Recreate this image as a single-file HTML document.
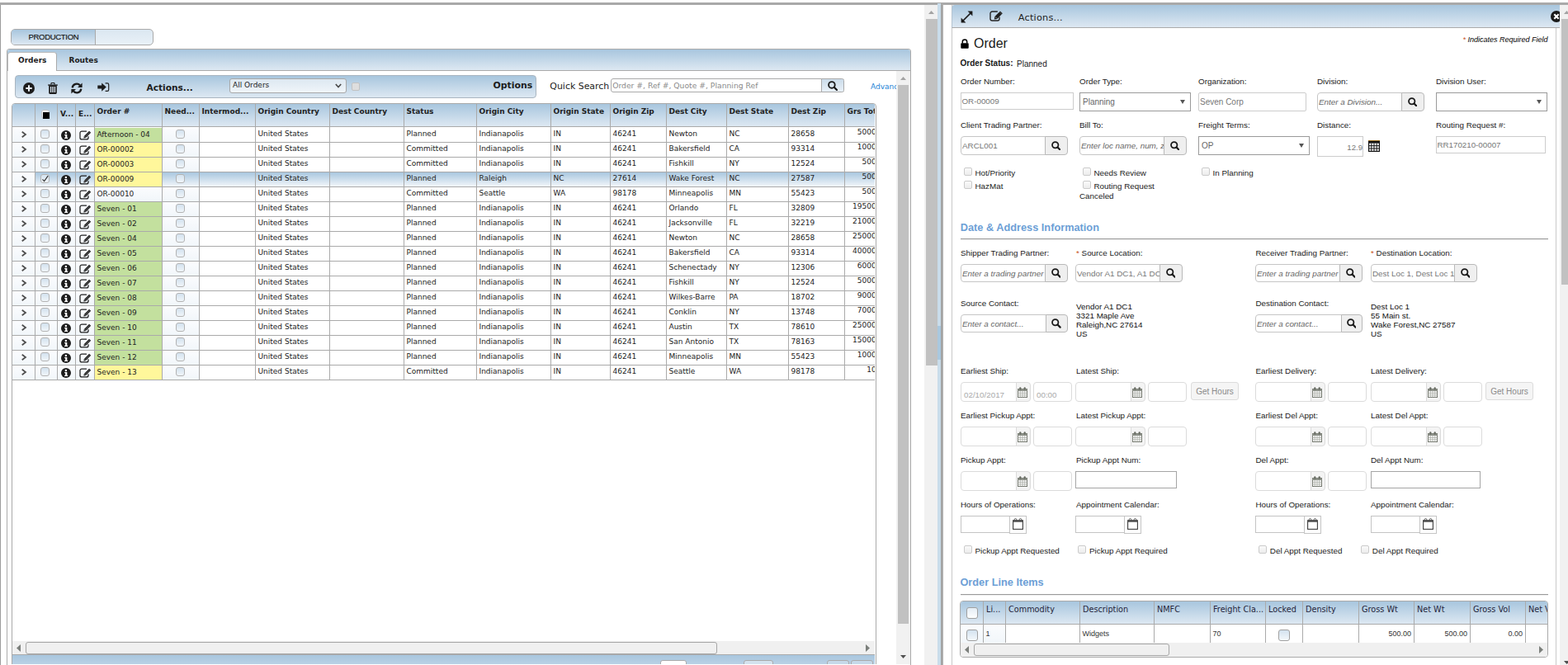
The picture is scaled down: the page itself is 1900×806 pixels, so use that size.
<!DOCTYPE html>
<html lang="en"><head><meta charset="utf-8"><title>Orders</title>
<style>
html,body{margin:0;padding:0;}
body{width:1900px;height:806px;overflow:hidden;background:#fff;position:relative;font-family:"Liberation Sans",Arial,sans-serif;font-size:10px;color:#222;}
.b{position:absolute;box-sizing:border-box;}
.t{position:absolute;white-space:nowrap;}
.fa{font-family:"Liberation Sans",Arial,sans-serif;}
.fg{font-family:"DejaVu Sans Condensed","DejaVu Sans",sans-serif;}
.fw{font-family:"DejaVu Sans",sans-serif;}
.grad{background:linear-gradient(#a8c6de,#dde8f2);}
table.g{border-collapse:separate;border-spacing:0;table-layout:fixed;font-family:"DejaVu Sans",sans-serif;font-size:9px;color:#222;}
table.g td,table.g th{box-sizing:border-box;border-right:1px solid #aaa;border-bottom:1px solid #aaa;padding:0 0 0 2.5px;overflow:hidden;white-space:nowrap;text-align:left;vertical-align:top;}
table.g th{height:28px;font-weight:700;line-height:12px;padding-top:3px;background:transparent;}
table.g td{height:18px;line-height:14px;background:#fff;}
table.g td.o{line-height:16px;}
table.g tr.sp td{height:1px;border-bottom:0;padding:0;line-height:0;}
table.g td.f{background:linear-gradient(#fbfcfe,#f1f6fa);}
table.g td.gr{background:#c3e09e;}
table.g td.ye{background:#fff79b;}
table.g tr.sel td{background:linear-gradient(#a9c7df,#f2f6fa);}
table.g tr.sel td.f0{background:linear-gradient(#fbfcfe,#f1f6fa);}
table.g tr.sel td.ye{background:#fff79b;}
table.g td.c{padding:0;position:relative;}
.ic{position:absolute;display:block;line-height:0;}
table.g td.num{text-align:right;padding-right:3px;line-height:11px;}
.cb{display:inline-block;box-sizing:border-box;width:11px;height:11px;border:1px solid #b3b3b3;border-radius:3px;background:linear-gradient(#d3e2ef,#f0f5f9);vertical-align:top;}
.cbx{position:absolute;box-sizing:border-box;width:10px;height:10px;border:1px solid #cbcbcb;border-radius:2px;background:linear-gradient(#fafafa,#ececec);}
.inp{position:absolute;box-sizing:border-box;border:1px solid #ccc;background:#fff;}
.btn{position:absolute;box-sizing:border-box;border:1px solid #bbb;background:#efefef;}
</style></head><body>
<style>
table.li th{font-weight:400;height:28px;padding-top:4px;font-size:9.7px;padding-left:3px;font-family:"DejaVu Sans",sans-serif;color:#26263c;}
table.li td{height:23px;line-height:22px;}
table.li td.a{font-family:"Liberation Sans",Arial,sans-serif;color:#333;line-height:23px;}
table.li td.r{text-align:right;padding-right:3px;}
.cb2{display:inline-block;box-sizing:border-box;width:14px;height:14px;border:1px solid #a0a0a0;border-radius:3px;background:linear-gradient(#d3e2ef,#f4f8fb);vertical-align:top;}
th .cb2{background:linear-gradient(#e4edf5,#fdfeff);}
</style><div class="b " style="left:0px;top:3px;width:1900px;height:3px;background:#a9a9a9;"></div>
<div class="b " style="left:0px;top:6px;width:1px;height:800px;background:#9c9c9c;"></div>
<div class="b " style="left:13px;top:35px;width:173px;height:20px;border:1px solid #aaa;border-radius:5px;overflow:hidden;background:linear-gradient(#dbe7f1,#e9f1f7);"><div class="b grad" style="left:0px;top:0px;width:102px;height:18px;border-right:1px solid #aaa;"></div></div>
<span class="t fa " style="left:34.5px;top:38.51px;font-size:9.5px;line-height:12px;color:#111;letter-spacing:-0.3px;-webkit-text-stroke:0.15px #111;">PRODUCTION</span>
<div class="b " style="left:8px;top:59px;width:1096px;height:760px;border:1px solid #aaa;border-radius:3px 3px 0 0;"></div>
<div class="b grad" style="left:9px;top:60px;width:1094px;height:26px;border-bottom:1px solid #aaa;border-radius:3px 3px 0 0;"></div>
<div class="b " style="left:9px;top:63px;width:60px;height:23px;background:#fff;border:1px solid #bcbcbc;border-right-color:#aaa;border-bottom:0;border-radius:4px 4px 0 0;"></div>
<span class="t fw " style="left:22px;top:67.09px;font-size:9.0px;line-height:12px;color:#1c1c1c;font-weight:700;">Orders</span>
<span class="t fw " style="left:83.5px;top:67.09px;font-size:9.0px;line-height:12px;color:#1c1c1c;font-weight:700;">Routes</span>
<div class="b grad" style="left:18px;top:91px;width:632px;height:28px;border:1px solid #a9b5c0;border-radius:4px;"></div>
<div class="b" style="left:28px;top:100px"><svg width="14" height="14" viewBox="0 0 14 14" style="display:block;"><circle cx="7" cy="7" r="7" fill="#1c1c1c"/><path d="M6 3.3h2v2.7h2.7v2H8v2.7H6V8H3.3V6H6z" fill="#eef3f8"/></svg></div>
<div class="b" style="left:58px;top:100px"><svg width="12" height="14" viewBox="0 0 12 14" style="display:block;"><path d="M3.9 2.6V1.7c0-.8.5-1.3 1.2-1.3h1.8c.7 0 1.2.5 1.2 1.3v.9" fill="none" stroke="#1c1c1c" stroke-width="1.1"/><rect x="0.2" y="2.4" width="11.6" height="1.4" fill="#1c1c1c"/><path d="M1.2 3.6h9.6v9c0 .8-.5 1.3-1.2 1.3H2.4c-.7 0-1.2-.5-1.2-1.3z" fill="#1c1c1c"/><rect x="2.9" y="5" width="1.35" height="7" fill="#d6e3ee"/><rect x="5.3" y="5" width="1.4" height="7" fill="#d6e3ee"/><rect x="7.75" y="5" width="1.35" height="7" fill="#d6e3ee"/></svg></div>
<div class="b" style="left:86px;top:100px"><svg width="14" height="14" viewBox="0 0 14 14" style="display:block;"><path d="M1.7 6.4A5.3 5.3 0 0 1 11 3.5" fill="none" stroke="#1c1c1c" stroke-width="2.3"/><path d="M13.6 0.4v5.6H8z" fill="#1c1c1c"/><path d="M12.3 7.6A5.3 5.3 0 0 1 3 10.5" fill="none" stroke="#1c1c1c" stroke-width="2.3"/><path d="M0.4 13.6V8h5.6z" fill="#1c1c1c"/></svg></div>
<div class="b" style="left:117.5px;top:100px"><svg width="15" height="12" viewBox="0 0 15 12" style="display:block;"><path d="M0.3 3.5h4.9V0.4l5.6 5.2-5.6 5.2V7.4H0.3z" fill="#1c1c1c"/><path d="M9.6 0.8h2.5c1 0 1.6.6 1.6 1.6v6.4c0 1-.6 1.6-1.6 1.6H9.6" fill="none" stroke="#1c1c1c" stroke-width="1.15"/></svg></div>
<span class="t fw " style="left:177.5px;top:98.93px;font-size:10.6px;line-height:14px;color:#1c1c1c;font-weight:700;">Actions...</span>
<div class="b " style="left:278px;top:95px;width:142px;height:18px;border:1px solid #a8a8a8;border-radius:3px;background:linear-gradient(#dde8f1,#f0f5f9);"></div>
<span class="t fw " style="left:282px;top:96.89px;font-size:9.0px;line-height:12px;color:#222;">All Orders</span>
<div class="b" style="left:405.5px;top:101px"><svg width="8" height="6" viewBox="0 0 8 6" style="display:block;"><path d="M0.8 1L4 4.6L7.2 1" fill="none" stroke="#4a4a4a" stroke-width="1.6"/></svg></div>
<div class="b " style="left:426px;top:100px;width:10px;height:10px;border:1px solid #c2c2c2;border-radius:2px;background:#dedede;"></div>
<span class="t fw " style="left:597.5px;top:96.83px;font-size:10.9px;line-height:14px;color:#1c1c1c;font-weight:700;">Options</span>
<span class="t fw " style="left:666.3px;top:98.41px;font-size:10.95px;line-height:14px;color:#1c1c1c;">Quick Search</span>
<div class="b " style="left:740px;top:95px;width:256px;height:17px;border:1px solid #aaa;border-radius:3px 0 0 3px;background:#fff;"></div>
<span class="t fw " style="left:742.2px;top:97.81px;font-size:9.22px;line-height:12px;color:#8a8a8a;">Order #, Ref #, Quote #, Planning Ref</span>
<div class="b " style="left:995px;top:95px;width:28px;height:17px;border:1px solid #aaa;border-radius:0 2.5px 2.5px 0;background:linear-gradient(#cbdcea,#e9f1f8);"></div>
<div class="b" style="left:1003px;top:98px"><svg width="12" height="12" viewBox="0 0 12 12" style="display:block;"><circle cx="4.9" cy="4.9" r="3.8" fill="none" stroke="#1a1a1a" stroke-width="1.85"/><path d="M7.8 7.8L11 11" stroke="#1a1a1a" stroke-width="2.3" stroke-linecap="round"/></svg></div>
<div class="b " style="left:1050px;top:96px;width:36px;height:16px;overflow:hidden;"><span class="t fw " style="left:5px;top:2.99px;font-size:9.0px;line-height:12px;color:#2183d6;">Advanced</span></div>
<div class="b " style="left:14px;top:125px;width:1048px;height:700px;border:1px solid #aaa;border-radius:4px 4px 0 0;overflow:hidden;background:#fff;"><div class="b grad" style="left:0px;top:0px;width:1045px;height:28px;border-bottom:1px solid #aaa;"></div><div class="b" style="left:0;top:0;width:1045px;overflow:hidden"><table class="g" style="width:1065px"><colgroup><col style="width:28px"><col style="width:27px"><col style="width:22px"><col style="width:23px"><col style="width:82px"><col style="width:45px"><col style="width:68px"><col style="width:90px"><col style="width:90px"><col style="width:88px"><col style="width:90px"><col style="width:72px"><col style="width:68px"><col style="width:73px"><col style="width:75px"><col style="width:68px"><col style="width:56px"></colgroup><tr class="hd"><th></th><th style="padding:0;position:relative"><span style="position:absolute;left:6.5px;top:7px;width:10.5px;height:10.5px;box-sizing:border-box;border:1px solid #c2c2c2;border-radius:3px;background:linear-gradient(#fff,#e6eff6)"></span><span style="position:absolute;left:9px;top:10px;width:8px;height:8px;background:#000"></span></th><th style="padding-top:6px;padding-left:3px">V...</th><th style="padding-top:6px;padding-left:3px">E...</th><th>Order #</th><th>Need...</th><th>Intermod...</th><th>Origin Country</th><th>Dest Country</th><th>Status</th><th>Origin City</th><th>Origin State</th><th>Origin Zip</th><th>Dest City</th><th>Dest State</th><th>Dest Zip</th><th>Grs Tot Wt</th></tr><tr class="sp"><td></td><td></td><td></td><td></td><td></td><td></td><td></td><td></td><td></td><td></td><td></td><td></td><td></td><td></td><td></td><td></td><td></td></tr><tr class=""><td class="c f f0"><span class="ic" style="left:11px;top:4px"><svg width="7" height="8" viewBox="0 0 7 8" style="display:block;"><path d="M0.7 0.8 L5 4 L0.7 7.2" fill="none" stroke="#4d4d4d" stroke-width="1.7"/></svg></span></td><td class="c f"><span class="ic" style="left:6px;top:2px"><span class="cb"></span></span></td><td class="c f"><span class="ic" style="left:4px;top:3px"><svg width="12" height="12" viewBox="0 0 12 12" style="display:block;"><circle cx="6" cy="6" r="6" fill="#1c1c1c"/><circle cx="5.9" cy="2.9" r="1.25" fill="#fff"/><path d="M4.2 5h3.1v3.7h0.9v1.4H4.1V8.7h1.1V6.3H4.2z" fill="#fff"/></svg></span></td><td class="c f"><span class="ic" style="left:4px;top:2.5px"><svg width="15.2" height="12" viewBox="0 0 15.2 12" style="display:block;"><path d="M9 1H3.1A2.1 2.1 0 0 0 1 3.1v5.8A2.1 2.1 0 0 0 3.1 11h5.8A2.1 2.1 0 0 0 11 8.9V7.2" fill="none" stroke="#222" stroke-width="1.25"/><path d="M5.3 9.6l0.6-2.7 6.2-6.2 2.1 2.1-6.2 6.2z" fill="#1e1e1e"/><path d="M7.6 7.4l5.1-5.1" stroke="#8c8c8c" stroke-width="0.55"/><path d="M6.4 7.2l1.3 1.3" stroke="#f3f7fb" stroke-width="0.55"/></svg></span></td><td class="o gr">Afternoon - 04</td><td class="c f"><span class="ic" style="left:16px;top:2px"><span class="cb"></span></span></td><td></td><td>United States</td><td></td><td>Planned</td><td>Indianapolis</td><td>IN</td><td>46241</td><td>Newton</td><td>NC</td><td>28658</td><td class="num">5000.00</td></tr><tr class=""><td class="c f f0"><span class="ic" style="left:11px;top:4px"><svg width="7" height="8" viewBox="0 0 7 8" style="display:block;"><path d="M0.7 0.8 L5 4 L0.7 7.2" fill="none" stroke="#4d4d4d" stroke-width="1.7"/></svg></span></td><td class="c f"><span class="ic" style="left:6px;top:2px"><span class="cb"></span></span></td><td class="c f"><span class="ic" style="left:4px;top:3px"><svg width="12" height="12" viewBox="0 0 12 12" style="display:block;"><circle cx="6" cy="6" r="6" fill="#1c1c1c"/><circle cx="5.9" cy="2.9" r="1.25" fill="#fff"/><path d="M4.2 5h3.1v3.7h0.9v1.4H4.1V8.7h1.1V6.3H4.2z" fill="#fff"/></svg></span></td><td class="c f"><span class="ic" style="left:4px;top:2.5px"><svg width="15.2" height="12" viewBox="0 0 15.2 12" style="display:block;"><path d="M9 1H3.1A2.1 2.1 0 0 0 1 3.1v5.8A2.1 2.1 0 0 0 3.1 11h5.8A2.1 2.1 0 0 0 11 8.9V7.2" fill="none" stroke="#222" stroke-width="1.25"/><path d="M5.3 9.6l0.6-2.7 6.2-6.2 2.1 2.1-6.2 6.2z" fill="#1e1e1e"/><path d="M7.6 7.4l5.1-5.1" stroke="#8c8c8c" stroke-width="0.55"/><path d="M6.4 7.2l1.3 1.3" stroke="#f3f7fb" stroke-width="0.55"/></svg></span></td><td class="o ye">OR-00002</td><td class="c f"><span class="ic" style="left:16px;top:2px"><span class="cb"></span></span></td><td></td><td>United States</td><td></td><td>Committed</td><td>Indianapolis</td><td>IN</td><td>46241</td><td>Bakersfield</td><td>CA</td><td>93314</td><td class="num">1000.00</td></tr><tr class=""><td class="c f f0"><span class="ic" style="left:11px;top:4px"><svg width="7" height="8" viewBox="0 0 7 8" style="display:block;"><path d="M0.7 0.8 L5 4 L0.7 7.2" fill="none" stroke="#4d4d4d" stroke-width="1.7"/></svg></span></td><td class="c f"><span class="ic" style="left:6px;top:2px"><span class="cb"></span></span></td><td class="c f"><span class="ic" style="left:4px;top:3px"><svg width="12" height="12" viewBox="0 0 12 12" style="display:block;"><circle cx="6" cy="6" r="6" fill="#1c1c1c"/><circle cx="5.9" cy="2.9" r="1.25" fill="#fff"/><path d="M4.2 5h3.1v3.7h0.9v1.4H4.1V8.7h1.1V6.3H4.2z" fill="#fff"/></svg></span></td><td class="c f"><span class="ic" style="left:4px;top:2.5px"><svg width="15.2" height="12" viewBox="0 0 15.2 12" style="display:block;"><path d="M9 1H3.1A2.1 2.1 0 0 0 1 3.1v5.8A2.1 2.1 0 0 0 3.1 11h5.8A2.1 2.1 0 0 0 11 8.9V7.2" fill="none" stroke="#222" stroke-width="1.25"/><path d="M5.3 9.6l0.6-2.7 6.2-6.2 2.1 2.1-6.2 6.2z" fill="#1e1e1e"/><path d="M7.6 7.4l5.1-5.1" stroke="#8c8c8c" stroke-width="0.55"/><path d="M6.4 7.2l1.3 1.3" stroke="#f3f7fb" stroke-width="0.55"/></svg></span></td><td class="o ye">OR-00003</td><td class="c f"><span class="ic" style="left:16px;top:2px"><span class="cb"></span></span></td><td></td><td>United States</td><td></td><td>Committed</td><td>Indianapolis</td><td>IN</td><td>46241</td><td>Fishkill</td><td>NY</td><td>12524</td><td class="num">500.00</td></tr><tr class="sel"><td class="c f f0"><span class="ic" style="left:11px;top:4px"><svg width="7" height="8" viewBox="0 0 7 8" style="display:block;"><path d="M0.7 0.8 L5 4 L0.7 7.2" fill="none" stroke="#4d4d4d" stroke-width="1.7"/></svg></span></td><td class="c f"><span class="ic" style="left:6px;top:2px"><span class="cb" style="position:relative"><svg width="9" height="9" viewBox="0 0 9 9" style="position:absolute;left:0;top:0"><path d="M1.5 5.4L3.6 7.6L8.2 1.2" fill="none" stroke="#333" stroke-width="1.2"/></svg></span></span></td><td class="c f"><span class="ic" style="left:4px;top:3px"><svg width="12" height="12" viewBox="0 0 12 12" style="display:block;"><circle cx="6" cy="6" r="6" fill="#1c1c1c"/><circle cx="5.9" cy="2.9" r="1.25" fill="#fff"/><path d="M4.2 5h3.1v3.7h0.9v1.4H4.1V8.7h1.1V6.3H4.2z" fill="#fff"/></svg></span></td><td class="c f"><span class="ic" style="left:4px;top:2.5px"><svg width="15.2" height="12" viewBox="0 0 15.2 12" style="display:block;"><path d="M9 1H3.1A2.1 2.1 0 0 0 1 3.1v5.8A2.1 2.1 0 0 0 3.1 11h5.8A2.1 2.1 0 0 0 11 8.9V7.2" fill="none" stroke="#222" stroke-width="1.25"/><path d="M5.3 9.6l0.6-2.7 6.2-6.2 2.1 2.1-6.2 6.2z" fill="#1e1e1e"/><path d="M7.6 7.4l5.1-5.1" stroke="#8c8c8c" stroke-width="0.55"/><path d="M6.4 7.2l1.3 1.3" stroke="#f3f7fb" stroke-width="0.55"/></svg></span></td><td class="o ye">OR-00009</td><td class="c f"><span class="ic" style="left:16px;top:2px"><span class="cb"></span></span></td><td></td><td>United States</td><td></td><td>Planned</td><td>Raleigh</td><td>NC</td><td>27614</td><td>Wake Forest</td><td>NC</td><td>27587</td><td class="num">500.00</td></tr><tr class=""><td class="c f f0"><span class="ic" style="left:11px;top:4px"><svg width="7" height="8" viewBox="0 0 7 8" style="display:block;"><path d="M0.7 0.8 L5 4 L0.7 7.2" fill="none" stroke="#4d4d4d" stroke-width="1.7"/></svg></span></td><td class="c f"><span class="ic" style="left:6px;top:2px"><span class="cb"></span></span></td><td class="c f"><span class="ic" style="left:4px;top:3px"><svg width="12" height="12" viewBox="0 0 12 12" style="display:block;"><circle cx="6" cy="6" r="6" fill="#1c1c1c"/><circle cx="5.9" cy="2.9" r="1.25" fill="#fff"/><path d="M4.2 5h3.1v3.7h0.9v1.4H4.1V8.7h1.1V6.3H4.2z" fill="#fff"/></svg></span></td><td class="c f"><span class="ic" style="left:4px;top:2.5px"><svg width="15.2" height="12" viewBox="0 0 15.2 12" style="display:block;"><path d="M9 1H3.1A2.1 2.1 0 0 0 1 3.1v5.8A2.1 2.1 0 0 0 3.1 11h5.8A2.1 2.1 0 0 0 11 8.9V7.2" fill="none" stroke="#222" stroke-width="1.25"/><path d="M5.3 9.6l0.6-2.7 6.2-6.2 2.1 2.1-6.2 6.2z" fill="#1e1e1e"/><path d="M7.6 7.4l5.1-5.1" stroke="#8c8c8c" stroke-width="0.55"/><path d="M6.4 7.2l1.3 1.3" stroke="#f3f7fb" stroke-width="0.55"/></svg></span></td><td class="o f">OR-00010</td><td class="c f"><span class="ic" style="left:16px;top:2px"><span class="cb"></span></span></td><td></td><td>United States</td><td></td><td>Committed</td><td>Seattle</td><td>WA</td><td>98178</td><td>Minneapolis</td><td>MN</td><td>55423</td><td class="num">500.00</td></tr><tr class=""><td class="c f f0"><span class="ic" style="left:11px;top:4px"><svg width="7" height="8" viewBox="0 0 7 8" style="display:block;"><path d="M0.7 0.8 L5 4 L0.7 7.2" fill="none" stroke="#4d4d4d" stroke-width="1.7"/></svg></span></td><td class="c f"><span class="ic" style="left:6px;top:2px"><span class="cb"></span></span></td><td class="c f"><span class="ic" style="left:4px;top:3px"><svg width="12" height="12" viewBox="0 0 12 12" style="display:block;"><circle cx="6" cy="6" r="6" fill="#1c1c1c"/><circle cx="5.9" cy="2.9" r="1.25" fill="#fff"/><path d="M4.2 5h3.1v3.7h0.9v1.4H4.1V8.7h1.1V6.3H4.2z" fill="#fff"/></svg></span></td><td class="c f"><span class="ic" style="left:4px;top:2.5px"><svg width="15.2" height="12" viewBox="0 0 15.2 12" style="display:block;"><path d="M9 1H3.1A2.1 2.1 0 0 0 1 3.1v5.8A2.1 2.1 0 0 0 3.1 11h5.8A2.1 2.1 0 0 0 11 8.9V7.2" fill="none" stroke="#222" stroke-width="1.25"/><path d="M5.3 9.6l0.6-2.7 6.2-6.2 2.1 2.1-6.2 6.2z" fill="#1e1e1e"/><path d="M7.6 7.4l5.1-5.1" stroke="#8c8c8c" stroke-width="0.55"/><path d="M6.4 7.2l1.3 1.3" stroke="#f3f7fb" stroke-width="0.55"/></svg></span></td><td class="o gr">Seven - 01</td><td class="c f"><span class="ic" style="left:16px;top:2px"><span class="cb"></span></span></td><td></td><td>United States</td><td></td><td>Planned</td><td>Indianapolis</td><td>IN</td><td>46241</td><td>Orlando</td><td>FL</td><td>32809</td><td class="num">19500.00</td></tr><tr class=""><td class="c f f0"><span class="ic" style="left:11px;top:4px"><svg width="7" height="8" viewBox="0 0 7 8" style="display:block;"><path d="M0.7 0.8 L5 4 L0.7 7.2" fill="none" stroke="#4d4d4d" stroke-width="1.7"/></svg></span></td><td class="c f"><span class="ic" style="left:6px;top:2px"><span class="cb"></span></span></td><td class="c f"><span class="ic" style="left:4px;top:3px"><svg width="12" height="12" viewBox="0 0 12 12" style="display:block;"><circle cx="6" cy="6" r="6" fill="#1c1c1c"/><circle cx="5.9" cy="2.9" r="1.25" fill="#fff"/><path d="M4.2 5h3.1v3.7h0.9v1.4H4.1V8.7h1.1V6.3H4.2z" fill="#fff"/></svg></span></td><td class="c f"><span class="ic" style="left:4px;top:2.5px"><svg width="15.2" height="12" viewBox="0 0 15.2 12" style="display:block;"><path d="M9 1H3.1A2.1 2.1 0 0 0 1 3.1v5.8A2.1 2.1 0 0 0 3.1 11h5.8A2.1 2.1 0 0 0 11 8.9V7.2" fill="none" stroke="#222" stroke-width="1.25"/><path d="M5.3 9.6l0.6-2.7 6.2-6.2 2.1 2.1-6.2 6.2z" fill="#1e1e1e"/><path d="M7.6 7.4l5.1-5.1" stroke="#8c8c8c" stroke-width="0.55"/><path d="M6.4 7.2l1.3 1.3" stroke="#f3f7fb" stroke-width="0.55"/></svg></span></td><td class="o gr">Seven - 02</td><td class="c f"><span class="ic" style="left:16px;top:2px"><span class="cb"></span></span></td><td></td><td>United States</td><td></td><td>Planned</td><td>Indianapolis</td><td>IN</td><td>46241</td><td>Jacksonville</td><td>FL</td><td>32219</td><td class="num">21000.00</td></tr><tr class=""><td class="c f f0"><span class="ic" style="left:11px;top:4px"><svg width="7" height="8" viewBox="0 0 7 8" style="display:block;"><path d="M0.7 0.8 L5 4 L0.7 7.2" fill="none" stroke="#4d4d4d" stroke-width="1.7"/></svg></span></td><td class="c f"><span class="ic" style="left:6px;top:2px"><span class="cb"></span></span></td><td class="c f"><span class="ic" style="left:4px;top:3px"><svg width="12" height="12" viewBox="0 0 12 12" style="display:block;"><circle cx="6" cy="6" r="6" fill="#1c1c1c"/><circle cx="5.9" cy="2.9" r="1.25" fill="#fff"/><path d="M4.2 5h3.1v3.7h0.9v1.4H4.1V8.7h1.1V6.3H4.2z" fill="#fff"/></svg></span></td><td class="c f"><span class="ic" style="left:4px;top:2.5px"><svg width="15.2" height="12" viewBox="0 0 15.2 12" style="display:block;"><path d="M9 1H3.1A2.1 2.1 0 0 0 1 3.1v5.8A2.1 2.1 0 0 0 3.1 11h5.8A2.1 2.1 0 0 0 11 8.9V7.2" fill="none" stroke="#222" stroke-width="1.25"/><path d="M5.3 9.6l0.6-2.7 6.2-6.2 2.1 2.1-6.2 6.2z" fill="#1e1e1e"/><path d="M7.6 7.4l5.1-5.1" stroke="#8c8c8c" stroke-width="0.55"/><path d="M6.4 7.2l1.3 1.3" stroke="#f3f7fb" stroke-width="0.55"/></svg></span></td><td class="o gr">Seven - 04</td><td class="c f"><span class="ic" style="left:16px;top:2px"><span class="cb"></span></span></td><td></td><td>United States</td><td></td><td>Planned</td><td>Indianapolis</td><td>IN</td><td>46241</td><td>Newton</td><td>NC</td><td>28658</td><td class="num">25000.00</td></tr><tr class=""><td class="c f f0"><span class="ic" style="left:11px;top:4px"><svg width="7" height="8" viewBox="0 0 7 8" style="display:block;"><path d="M0.7 0.8 L5 4 L0.7 7.2" fill="none" stroke="#4d4d4d" stroke-width="1.7"/></svg></span></td><td class="c f"><span class="ic" style="left:6px;top:2px"><span class="cb"></span></span></td><td class="c f"><span class="ic" style="left:4px;top:3px"><svg width="12" height="12" viewBox="0 0 12 12" style="display:block;"><circle cx="6" cy="6" r="6" fill="#1c1c1c"/><circle cx="5.9" cy="2.9" r="1.25" fill="#fff"/><path d="M4.2 5h3.1v3.7h0.9v1.4H4.1V8.7h1.1V6.3H4.2z" fill="#fff"/></svg></span></td><td class="c f"><span class="ic" style="left:4px;top:2.5px"><svg width="15.2" height="12" viewBox="0 0 15.2 12" style="display:block;"><path d="M9 1H3.1A2.1 2.1 0 0 0 1 3.1v5.8A2.1 2.1 0 0 0 3.1 11h5.8A2.1 2.1 0 0 0 11 8.9V7.2" fill="none" stroke="#222" stroke-width="1.25"/><path d="M5.3 9.6l0.6-2.7 6.2-6.2 2.1 2.1-6.2 6.2z" fill="#1e1e1e"/><path d="M7.6 7.4l5.1-5.1" stroke="#8c8c8c" stroke-width="0.55"/><path d="M6.4 7.2l1.3 1.3" stroke="#f3f7fb" stroke-width="0.55"/></svg></span></td><td class="o gr">Seven - 05</td><td class="c f"><span class="ic" style="left:16px;top:2px"><span class="cb"></span></span></td><td></td><td>United States</td><td></td><td>Planned</td><td>Indianapolis</td><td>IN</td><td>46241</td><td>Bakersfield</td><td>CA</td><td>93314</td><td class="num">40000.00</td></tr><tr class=""><td class="c f f0"><span class="ic" style="left:11px;top:4px"><svg width="7" height="8" viewBox="0 0 7 8" style="display:block;"><path d="M0.7 0.8 L5 4 L0.7 7.2" fill="none" stroke="#4d4d4d" stroke-width="1.7"/></svg></span></td><td class="c f"><span class="ic" style="left:6px;top:2px"><span class="cb"></span></span></td><td class="c f"><span class="ic" style="left:4px;top:3px"><svg width="12" height="12" viewBox="0 0 12 12" style="display:block;"><circle cx="6" cy="6" r="6" fill="#1c1c1c"/><circle cx="5.9" cy="2.9" r="1.25" fill="#fff"/><path d="M4.2 5h3.1v3.7h0.9v1.4H4.1V8.7h1.1V6.3H4.2z" fill="#fff"/></svg></span></td><td class="c f"><span class="ic" style="left:4px;top:2.5px"><svg width="15.2" height="12" viewBox="0 0 15.2 12" style="display:block;"><path d="M9 1H3.1A2.1 2.1 0 0 0 1 3.1v5.8A2.1 2.1 0 0 0 3.1 11h5.8A2.1 2.1 0 0 0 11 8.9V7.2" fill="none" stroke="#222" stroke-width="1.25"/><path d="M5.3 9.6l0.6-2.7 6.2-6.2 2.1 2.1-6.2 6.2z" fill="#1e1e1e"/><path d="M7.6 7.4l5.1-5.1" stroke="#8c8c8c" stroke-width="0.55"/><path d="M6.4 7.2l1.3 1.3" stroke="#f3f7fb" stroke-width="0.55"/></svg></span></td><td class="o gr">Seven - 06</td><td class="c f"><span class="ic" style="left:16px;top:2px"><span class="cb"></span></span></td><td></td><td>United States</td><td></td><td>Planned</td><td>Indianapolis</td><td>IN</td><td>46241</td><td>Schenectady</td><td>NY</td><td>12306</td><td class="num">6000.00</td></tr><tr class=""><td class="c f f0"><span class="ic" style="left:11px;top:4px"><svg width="7" height="8" viewBox="0 0 7 8" style="display:block;"><path d="M0.7 0.8 L5 4 L0.7 7.2" fill="none" stroke="#4d4d4d" stroke-width="1.7"/></svg></span></td><td class="c f"><span class="ic" style="left:6px;top:2px"><span class="cb"></span></span></td><td class="c f"><span class="ic" style="left:4px;top:3px"><svg width="12" height="12" viewBox="0 0 12 12" style="display:block;"><circle cx="6" cy="6" r="6" fill="#1c1c1c"/><circle cx="5.9" cy="2.9" r="1.25" fill="#fff"/><path d="M4.2 5h3.1v3.7h0.9v1.4H4.1V8.7h1.1V6.3H4.2z" fill="#fff"/></svg></span></td><td class="c f"><span class="ic" style="left:4px;top:2.5px"><svg width="15.2" height="12" viewBox="0 0 15.2 12" style="display:block;"><path d="M9 1H3.1A2.1 2.1 0 0 0 1 3.1v5.8A2.1 2.1 0 0 0 3.1 11h5.8A2.1 2.1 0 0 0 11 8.9V7.2" fill="none" stroke="#222" stroke-width="1.25"/><path d="M5.3 9.6l0.6-2.7 6.2-6.2 2.1 2.1-6.2 6.2z" fill="#1e1e1e"/><path d="M7.6 7.4l5.1-5.1" stroke="#8c8c8c" stroke-width="0.55"/><path d="M6.4 7.2l1.3 1.3" stroke="#f3f7fb" stroke-width="0.55"/></svg></span></td><td class="o gr">Seven - 07</td><td class="c f"><span class="ic" style="left:16px;top:2px"><span class="cb"></span></span></td><td></td><td>United States</td><td></td><td>Planned</td><td>Indianapolis</td><td>IN</td><td>46241</td><td>Fishkill</td><td>NY</td><td>12524</td><td class="num">5000.00</td></tr><tr class=""><td class="c f f0"><span class="ic" style="left:11px;top:4px"><svg width="7" height="8" viewBox="0 0 7 8" style="display:block;"><path d="M0.7 0.8 L5 4 L0.7 7.2" fill="none" stroke="#4d4d4d" stroke-width="1.7"/></svg></span></td><td class="c f"><span class="ic" style="left:6px;top:2px"><span class="cb"></span></span></td><td class="c f"><span class="ic" style="left:4px;top:3px"><svg width="12" height="12" viewBox="0 0 12 12" style="display:block;"><circle cx="6" cy="6" r="6" fill="#1c1c1c"/><circle cx="5.9" cy="2.9" r="1.25" fill="#fff"/><path d="M4.2 5h3.1v3.7h0.9v1.4H4.1V8.7h1.1V6.3H4.2z" fill="#fff"/></svg></span></td><td class="c f"><span class="ic" style="left:4px;top:2.5px"><svg width="15.2" height="12" viewBox="0 0 15.2 12" style="display:block;"><path d="M9 1H3.1A2.1 2.1 0 0 0 1 3.1v5.8A2.1 2.1 0 0 0 3.1 11h5.8A2.1 2.1 0 0 0 11 8.9V7.2" fill="none" stroke="#222" stroke-width="1.25"/><path d="M5.3 9.6l0.6-2.7 6.2-6.2 2.1 2.1-6.2 6.2z" fill="#1e1e1e"/><path d="M7.6 7.4l5.1-5.1" stroke="#8c8c8c" stroke-width="0.55"/><path d="M6.4 7.2l1.3 1.3" stroke="#f3f7fb" stroke-width="0.55"/></svg></span></td><td class="o gr">Seven - 08</td><td class="c f"><span class="ic" style="left:16px;top:2px"><span class="cb"></span></span></td><td></td><td>United States</td><td></td><td>Planned</td><td>Indianapolis</td><td>IN</td><td>46241</td><td>Wilkes-Barre</td><td>PA</td><td>18702</td><td class="num">9000.00</td></tr><tr class=""><td class="c f f0"><span class="ic" style="left:11px;top:4px"><svg width="7" height="8" viewBox="0 0 7 8" style="display:block;"><path d="M0.7 0.8 L5 4 L0.7 7.2" fill="none" stroke="#4d4d4d" stroke-width="1.7"/></svg></span></td><td class="c f"><span class="ic" style="left:6px;top:2px"><span class="cb"></span></span></td><td class="c f"><span class="ic" style="left:4px;top:3px"><svg width="12" height="12" viewBox="0 0 12 12" style="display:block;"><circle cx="6" cy="6" r="6" fill="#1c1c1c"/><circle cx="5.9" cy="2.9" r="1.25" fill="#fff"/><path d="M4.2 5h3.1v3.7h0.9v1.4H4.1V8.7h1.1V6.3H4.2z" fill="#fff"/></svg></span></td><td class="c f"><span class="ic" style="left:4px;top:2.5px"><svg width="15.2" height="12" viewBox="0 0 15.2 12" style="display:block;"><path d="M9 1H3.1A2.1 2.1 0 0 0 1 3.1v5.8A2.1 2.1 0 0 0 3.1 11h5.8A2.1 2.1 0 0 0 11 8.9V7.2" fill="none" stroke="#222" stroke-width="1.25"/><path d="M5.3 9.6l0.6-2.7 6.2-6.2 2.1 2.1-6.2 6.2z" fill="#1e1e1e"/><path d="M7.6 7.4l5.1-5.1" stroke="#8c8c8c" stroke-width="0.55"/><path d="M6.4 7.2l1.3 1.3" stroke="#f3f7fb" stroke-width="0.55"/></svg></span></td><td class="o gr">Seven - 09</td><td class="c f"><span class="ic" style="left:16px;top:2px"><span class="cb"></span></span></td><td></td><td>United States</td><td></td><td>Planned</td><td>Indianapolis</td><td>IN</td><td>46241</td><td>Conklin</td><td>NY</td><td>13748</td><td class="num">7000.00</td></tr><tr class=""><td class="c f f0"><span class="ic" style="left:11px;top:4px"><svg width="7" height="8" viewBox="0 0 7 8" style="display:block;"><path d="M0.7 0.8 L5 4 L0.7 7.2" fill="none" stroke="#4d4d4d" stroke-width="1.7"/></svg></span></td><td class="c f"><span class="ic" style="left:6px;top:2px"><span class="cb"></span></span></td><td class="c f"><span class="ic" style="left:4px;top:3px"><svg width="12" height="12" viewBox="0 0 12 12" style="display:block;"><circle cx="6" cy="6" r="6" fill="#1c1c1c"/><circle cx="5.9" cy="2.9" r="1.25" fill="#fff"/><path d="M4.2 5h3.1v3.7h0.9v1.4H4.1V8.7h1.1V6.3H4.2z" fill="#fff"/></svg></span></td><td class="c f"><span class="ic" style="left:4px;top:2.5px"><svg width="15.2" height="12" viewBox="0 0 15.2 12" style="display:block;"><path d="M9 1H3.1A2.1 2.1 0 0 0 1 3.1v5.8A2.1 2.1 0 0 0 3.1 11h5.8A2.1 2.1 0 0 0 11 8.9V7.2" fill="none" stroke="#222" stroke-width="1.25"/><path d="M5.3 9.6l0.6-2.7 6.2-6.2 2.1 2.1-6.2 6.2z" fill="#1e1e1e"/><path d="M7.6 7.4l5.1-5.1" stroke="#8c8c8c" stroke-width="0.55"/><path d="M6.4 7.2l1.3 1.3" stroke="#f3f7fb" stroke-width="0.55"/></svg></span></td><td class="o gr">Seven - 10</td><td class="c f"><span class="ic" style="left:16px;top:2px"><span class="cb"></span></span></td><td></td><td>United States</td><td></td><td>Planned</td><td>Indianapolis</td><td>IN</td><td>46241</td><td>Austin</td><td>TX</td><td>78610</td><td class="num">25000.00</td></tr><tr class=""><td class="c f f0"><span class="ic" style="left:11px;top:4px"><svg width="7" height="8" viewBox="0 0 7 8" style="display:block;"><path d="M0.7 0.8 L5 4 L0.7 7.2" fill="none" stroke="#4d4d4d" stroke-width="1.7"/></svg></span></td><td class="c f"><span class="ic" style="left:6px;top:2px"><span class="cb"></span></span></td><td class="c f"><span class="ic" style="left:4px;top:3px"><svg width="12" height="12" viewBox="0 0 12 12" style="display:block;"><circle cx="6" cy="6" r="6" fill="#1c1c1c"/><circle cx="5.9" cy="2.9" r="1.25" fill="#fff"/><path d="M4.2 5h3.1v3.7h0.9v1.4H4.1V8.7h1.1V6.3H4.2z" fill="#fff"/></svg></span></td><td class="c f"><span class="ic" style="left:4px;top:2.5px"><svg width="15.2" height="12" viewBox="0 0 15.2 12" style="display:block;"><path d="M9 1H3.1A2.1 2.1 0 0 0 1 3.1v5.8A2.1 2.1 0 0 0 3.1 11h5.8A2.1 2.1 0 0 0 11 8.9V7.2" fill="none" stroke="#222" stroke-width="1.25"/><path d="M5.3 9.6l0.6-2.7 6.2-6.2 2.1 2.1-6.2 6.2z" fill="#1e1e1e"/><path d="M7.6 7.4l5.1-5.1" stroke="#8c8c8c" stroke-width="0.55"/><path d="M6.4 7.2l1.3 1.3" stroke="#f3f7fb" stroke-width="0.55"/></svg></span></td><td class="o gr">Seven - 11</td><td class="c f"><span class="ic" style="left:16px;top:2px"><span class="cb"></span></span></td><td></td><td>United States</td><td></td><td>Planned</td><td>Indianapolis</td><td>IN</td><td>46241</td><td>San Antonio</td><td>TX</td><td>78163</td><td class="num">15000.00</td></tr><tr class=""><td class="c f f0"><span class="ic" style="left:11px;top:4px"><svg width="7" height="8" viewBox="0 0 7 8" style="display:block;"><path d="M0.7 0.8 L5 4 L0.7 7.2" fill="none" stroke="#4d4d4d" stroke-width="1.7"/></svg></span></td><td class="c f"><span class="ic" style="left:6px;top:2px"><span class="cb"></span></span></td><td class="c f"><span class="ic" style="left:4px;top:3px"><svg width="12" height="12" viewBox="0 0 12 12" style="display:block;"><circle cx="6" cy="6" r="6" fill="#1c1c1c"/><circle cx="5.9" cy="2.9" r="1.25" fill="#fff"/><path d="M4.2 5h3.1v3.7h0.9v1.4H4.1V8.7h1.1V6.3H4.2z" fill="#fff"/></svg></span></td><td class="c f"><span class="ic" style="left:4px;top:2.5px"><svg width="15.2" height="12" viewBox="0 0 15.2 12" style="display:block;"><path d="M9 1H3.1A2.1 2.1 0 0 0 1 3.1v5.8A2.1 2.1 0 0 0 3.1 11h5.8A2.1 2.1 0 0 0 11 8.9V7.2" fill="none" stroke="#222" stroke-width="1.25"/><path d="M5.3 9.6l0.6-2.7 6.2-6.2 2.1 2.1-6.2 6.2z" fill="#1e1e1e"/><path d="M7.6 7.4l5.1-5.1" stroke="#8c8c8c" stroke-width="0.55"/><path d="M6.4 7.2l1.3 1.3" stroke="#f3f7fb" stroke-width="0.55"/></svg></span></td><td class="o gr">Seven - 12</td><td class="c f"><span class="ic" style="left:16px;top:2px"><span class="cb"></span></span></td><td></td><td>United States</td><td></td><td>Planned</td><td>Indianapolis</td><td>IN</td><td>46241</td><td>Minneapolis</td><td>MN</td><td>55423</td><td class="num">1000.00</td></tr><tr class=""><td class="c f f0"><span class="ic" style="left:11px;top:4px"><svg width="7" height="8" viewBox="0 0 7 8" style="display:block;"><path d="M0.7 0.8 L5 4 L0.7 7.2" fill="none" stroke="#4d4d4d" stroke-width="1.7"/></svg></span></td><td class="c f"><span class="ic" style="left:6px;top:2px"><span class="cb"></span></span></td><td class="c f"><span class="ic" style="left:4px;top:3px"><svg width="12" height="12" viewBox="0 0 12 12" style="display:block;"><circle cx="6" cy="6" r="6" fill="#1c1c1c"/><circle cx="5.9" cy="2.9" r="1.25" fill="#fff"/><path d="M4.2 5h3.1v3.7h0.9v1.4H4.1V8.7h1.1V6.3H4.2z" fill="#fff"/></svg></span></td><td class="c f"><span class="ic" style="left:4px;top:2.5px"><svg width="15.2" height="12" viewBox="0 0 15.2 12" style="display:block;"><path d="M9 1H3.1A2.1 2.1 0 0 0 1 3.1v5.8A2.1 2.1 0 0 0 3.1 11h5.8A2.1 2.1 0 0 0 11 8.9V7.2" fill="none" stroke="#222" stroke-width="1.25"/><path d="M5.3 9.6l0.6-2.7 6.2-6.2 2.1 2.1-6.2 6.2z" fill="#1e1e1e"/><path d="M7.6 7.4l5.1-5.1" stroke="#8c8c8c" stroke-width="0.55"/><path d="M6.4 7.2l1.3 1.3" stroke="#f3f7fb" stroke-width="0.55"/></svg></span></td><td class="o ye">Seven - 13</td><td class="c f"><span class="ic" style="left:16px;top:2px"><span class="cb"></span></span></td><td></td><td>United States</td><td></td><td>Committed</td><td>Indianapolis</td><td>IN</td><td>46241</td><td>Seattle</td><td>WA</td><td>98178</td><td class="num">10.00</td></tr></table></div></div>
<div class="b " style="left:15px;top:777px;width:1045px;height:17px;background:#f0f0f0;"></div>
<div class="b " style="left:31px;top:778px;width:838px;height:15px;border:1px solid #a6a6a6;border-radius:3px;background:#f0f0f0;"></div>
<div class="b" style="left:20px;top:781px"><svg width="5" height="9" viewBox="0 0 5 9" style="display:block;"><path d="M5 0L0 4.5L5 9z" fill="#7b7f7b"/></svg></div>
<div class="b" style="left:1049px;top:781px"><svg width="5" height="9" viewBox="0 0 5 9" style="display:block;"><path d="M0 0L5 4.5L0 9z" fill="#7b7f7b"/></svg></div>
<div class="b " style="left:15px;top:793px;width:1045px;height:14px;border-top:1px solid #aaa;background:linear-gradient(#a8c6de,#bdd3e6);"></div>
<div class="b " style="left:800px;top:800px;width:32px;height:10px;border:1px solid #aaa;border-radius:3px;background:#fff;"></div>
<div class="b " style="left:901px;top:800px;width:36px;height:10px;border:1px solid #aaa;border-radius:3px;background:#d3e2ee;"></div>
<div class="b " style="left:1002px;top:800px;width:27px;height:10px;border:1px solid #aaa;border-radius:3px;background:#c5d9e9;"></div>
<div class="b " style="left:1031px;top:800px;width:27px;height:10px;border:1px solid #aaa;border-radius:3px;background:#c5d9e9;"></div>
<div class="b " style="left:1086px;top:86px;width:17px;height:720px;background:#f1f1f1;"></div>
<div class="b " style="left:1088px;top:103px;width:13px;height:653px;background:#c1c1c1;"></div>
<div class="b" style="left:1091px;top:92.7px"><svg width="7" height="4" viewBox="0 0 7 4" style="display:block;"><path d="M0 4L3.5 0L7 4z" fill="#a3a3a3"/></svg></div>
<div class="b" style="left:1091px;top:794px"><svg width="7" height="4" viewBox="0 0 7 4" style="display:block;"><path d="M0 0L3.5 4L7 0z" fill="#505050"/></svg></div>
<div class="b " style="left:1120px;top:6px;width:15.5px;height:800px;background:#f1f1f1;"></div>
<div class="b " style="left:1122px;top:23px;width:13.5px;height:420px;background:#c1c1c1;"></div>
<div class="b" style="left:1125px;top:13px"><svg width="7" height="4" viewBox="0 0 7 4" style="display:block;"><path d="M0 4L3.5 0L7 4z" fill="#a3a3a3"/></svg></div>
<div class="b " style="left:1135.5px;top:4px;width:4.5px;height:802px;background:#c9dcea;"></div>
<div class="b " style="left:1135.5px;top:395px;width:4.5px;height:41px;background:#a9c8df;"></div>
<div class="b " style="left:1140px;top:5.5px;width:2.8px;height:801px;background:linear-gradient(90deg,#9c9c9c,#b4b4b4);"></div>
<div class="b " style="left:9px;top:805px;width:1094px;height:1px;background:#fff;"></div>
<div class="b " style="left:1153px;top:6px;width:733px;height:830px;border:1px solid #c9c9c9;border-top:0;background:#fff;"></div>
<div class="b grad" style="left:1153px;top:6px;width:737px;height:28px;border:1px solid #b4c3d0;border-bottom-color:#aaa;border-top:0;border-right:0;border-radius:4px 0 0 0;"></div>
<div class="b" style="left:1164px;top:12.6px"><svg width="15" height="15" viewBox="0 0 15 15" style="display:block;"><path d="M3 12L12 3" stroke="#1a1a1a" stroke-width="1.7"/><path d="M8.6 0.6h5.8v5.8z" fill="#1a1a1a"/><path d="M0.6 8.6v5.8h5.8z" fill="#1a1a1a"/></svg></div>
<div class="b" style="left:1199px;top:13px"><svg width="16.5" height="13" viewBox="0 0 16.5 13" style="display:block;"><path d="M9.8 1H3.3A2.3 2.3 0 0 0 1 3.3v6.4A2.3 2.3 0 0 0 3.3 12h6.4A2.3 2.3 0 0 0 12 9.7V7.6" fill="none" stroke="#262626" stroke-width="1.4"/><path d="M5.7 10.4l0.7-3.3 6.6-6.6 2.8 2.8-6.6 6.6z" fill="#1e1e1e"/><path d="M7.1 7.6l1.6 1.6" stroke="#dfe9f2" stroke-width="0.7"/><path d="M12.2 1.6l2.6 2.6" stroke="#8a8a8a" stroke-width="0.5"/></svg></div>
<span class="t fw " style="left:1233.8px;top:14.49px;font-size:11.3px;line-height:15px;color:#1c1c1c;letter-spacing:0.2px;">Actions...</span>
<div class="b" style="left:1879px;top:13px"><svg width="14" height="14" viewBox="0 0 14 14" style="display:block;"><circle cx="7" cy="7" r="7" fill="#1a1a1a"/><path d="M4.3 4.3l5.4 5.4M9.7 4.3l-5.4 5.4" stroke="#fff" stroke-width="2.2"/></svg></div>
<div class="b" style="left:1164px;top:46.5px"><svg width="10" height="12" viewBox="0 0 10 12" style="display:block;"><path d="M2.3 5.5V3.6a2.7 2.7 0 0 1 5.4 0v1.9" fill="none" stroke="#000" stroke-width="1.5"/><rect x="0.3" y="5.2" width="9.4" height="6.5" rx="0.9" fill="#000"/></svg></div>
<span class="t fa " style="left:1180px;top:41.96px;font-size:16px;line-height:21px;color:#1a1a1a;">Order</span>
<span class="t fa " style="left:1772.5px;top:42.08px;font-size:9px;line-height:12px;color:#000;font-style:italic;"><span style="color:#c8511b">*</span> Indicates Required Field</span>
<span class="t fa " style="left:1163.6px;top:70.23px;font-size:10px;line-height:13px;color:#1a1a1a;font-weight:700;">Order Status:</span>
<span class="t fa " style="left:1232px;top:71.03px;font-size:10px;line-height:13px;color:#1a1a1a;">Planned</span>
<span class="t fa " style="left:1164px;top:92.09px;font-size:9.85px;line-height:13px;color:#1a1a1a;">Order Number:</span>
<span class="t fa " style="left:1308px;top:92.09px;font-size:9.85px;line-height:13px;color:#1a1a1a;">Order Type:</span>
<span class="t fa " style="left:1452px;top:92.09px;font-size:9.85px;line-height:13px;color:#1a1a1a;">Organization:</span>
<span class="t fa " style="left:1596px;top:92.09px;font-size:9.85px;line-height:13px;color:#1a1a1a;">Division:</span>
<span class="t fa " style="left:1740px;top:92.09px;font-size:9.85px;line-height:13px;color:#1a1a1a;">Division User:</span>
<div class="b " style="left:1164px;top:112px;width:137px;height:21px;border:1px solid #ccc;background:#fff;overflow:hidden;"><span class="t fa" style="left:0.5px;top:3.10px;font-size:9.8px;line-height:13px;color:#777;">OR-00009</span></div>
<div class="b " style="left:1308px;top:112px;width:135px;height:23px;border:1px solid #9a9a9a;background:#fff;"><span class="t fa" style="left:3px;top:4.0px;font-size:10px;line-height:13px;color:#666">Planning</span><div class="b" style="right:6px;top:7.5px"><svg width="6" height="5" viewBox="0 0 6 5" style="display:block;"><path d="M0 0h6L3 5z" fill="#555"/></svg></div></div>
<div class="b " style="left:1452px;top:112px;width:131px;height:23px;border:1px solid #ccc;background:#fff;overflow:hidden;border-radius:2px;"><span class="t fa" style="left:1px;top:4.10px;font-size:10px;line-height:13px;color:#777;">Seven Corp</span></div>
<div class="b " style="left:1596px;top:112px;width:103px;height:23px;border:1px solid #c6c6c6;background:#fff;overflow:hidden;border-radius:4px 0 0 4px;"><span class="t fa" style="left:1px;top:4.10px;font-size:9.85px;line-height:13px;color:#666;font-style:italic;">Enter a Division...</span></div><div class="b " style="left:1698px;top:112px;width:28px;height:23px;border:1px solid #b9b9b9;border-radius:0 4px 4px 0;background:#efefef;"><div class="b" style="left:6.6px;top:4.7px"><svg width="11.6" height="11.6" viewBox="0 0 12 12" style="display:block;"><circle cx="4.9" cy="4.9" r="3.8" fill="none" stroke="#1a1a1a" stroke-width="1.85"/><path d="M7.8 7.8L11 11" stroke="#1a1a1a" stroke-width="2.3" stroke-linecap="round"/></svg></div></div>
<div class="b " style="left:1740px;top:112px;width:135px;height:23px;border:1px solid #9a9a9a;background:#fff;"><div class="b" style="right:6px;top:7.5px"><svg width="6" height="5" viewBox="0 0 6 5" style="display:block;"><path d="M0 0h6L3 5z" fill="#555"/></svg></div></div>
<span class="t fa " style="left:1164px;top:145.09px;font-size:9.85px;line-height:13px;color:#1a1a1a;">Client Trading Partner:</span>
<span class="t fa " style="left:1308px;top:145.09px;font-size:9.85px;line-height:13px;color:#1a1a1a;">Bill To:</span>
<span class="t fa " style="left:1452px;top:145.09px;font-size:9.85px;line-height:13px;color:#1a1a1a;">Freight Terms:</span>
<span class="t fa " style="left:1596px;top:145.09px;font-size:9.85px;line-height:13px;color:#1a1a1a;">Distance:</span>
<span class="t fa " style="left:1740px;top:145.09px;font-size:9.85px;line-height:13px;color:#1a1a1a;">Routing Request #:</span>
<div class="b " style="left:1164px;top:165px;width:103px;height:23px;border:1px solid #c6c6c6;background:#fff;overflow:hidden;border-radius:4px 0 0 4px;"><span class="t fa" style="left:1px;top:4.10px;font-size:9.85px;line-height:13px;color:#777;">ARCL001</span></div><div class="b " style="left:1266px;top:165px;width:28px;height:23px;border:1px solid #b9b9b9;border-radius:0 4px 4px 0;background:#efefef;"><div class="b" style="left:6.6px;top:4.7px"><svg width="11.6" height="11.6" viewBox="0 0 12 12" style="display:block;"><circle cx="4.9" cy="4.9" r="3.8" fill="none" stroke="#1a1a1a" stroke-width="1.85"/><path d="M7.8 7.8L11 11" stroke="#1a1a1a" stroke-width="2.3" stroke-linecap="round"/></svg></div></div>
<div class="b " style="left:1308px;top:165px;width:103px;height:23px;border:1px solid #c6c6c6;background:#fff;overflow:hidden;border-radius:4px 0 0 4px;"><span class="t fa" style="left:1px;top:4.10px;font-size:9.85px;line-height:13px;color:#666;font-style:italic;">Enter loc name, num, zip</span></div><div class="b " style="left:1410px;top:165px;width:28px;height:23px;border:1px solid #b9b9b9;border-radius:0 4px 4px 0;background:#efefef;"><div class="b" style="left:6.6px;top:4.7px"><svg width="11.6" height="11.6" viewBox="0 0 12 12" style="display:block;"><circle cx="4.9" cy="4.9" r="3.8" fill="none" stroke="#1a1a1a" stroke-width="1.85"/><path d="M7.8 7.8L11 11" stroke="#1a1a1a" stroke-width="2.3" stroke-linecap="round"/></svg></div></div>
<div class="b " style="left:1452px;top:165px;width:135px;height:23px;border:1px solid #9a9a9a;background:#fff;"><span class="t fa" style="left:3px;top:4.0px;font-size:10px;line-height:13px;color:#666">OP</span><div class="b" style="right:6px;top:7.5px"><svg width="6" height="5" viewBox="0 0 6 5" style="display:block;"><path d="M0 0h6L3 5z" fill="#555"/></svg></div></div>
<div class="b " style="left:1596px;top:165px;width:56px;height:25px;border:1px solid #ccc;background:#fff;overflow:hidden;"><span class="t fa" style="right:0px;top:6.40px;font-size:9.6px;line-height:13px;color:#777;">12.9</span></div>
<div class="b" style="left:1658px;top:170px"><svg width="14" height="14" viewBox="0 0 14 14" style="display:block;"><rect x="0.6" y="0.6" width="12.8" height="12.8" fill="#fff" stroke="#111" stroke-width="1.2"/><rect x="0.6" y="0.6" width="12.8" height="3" fill="#111"/><path d="M0.6 6.7h12.8M0.6 10h12.8M3.8 3.6v9.8M7 3.6v9.8M10.2 3.6v9.8" stroke="#111" stroke-width="1"/><rect x="0" y="0" width="14" height="1" fill="#d99a2b" opacity=".7"/></svg></div>
<div class="b " style="left:1740px;top:165px;width:133px;height:21px;border:1px solid #ccc;background:#fff;overflow:hidden;"><span class="t fa" style="left:0.5px;top:3.10px;font-size:9.75px;line-height:13px;color:#777;">RR170210-00007</span></div>
<div class="cbx" style="left:1168px;top:203px"></div><span class="t fa " style="left:1181.5px;top:202.89px;font-size:9.85px;line-height:13px;color:#1a1a1a;">Hot/Priority</span>
<div class="cbx" style="left:1168px;top:219px"></div><span class="t fa " style="left:1181.5px;top:218.89px;font-size:9.85px;line-height:13px;color:#1a1a1a;">HazMat</span>
<div class="cbx" style="left:1312px;top:203px"></div><span class="t fa " style="left:1325.5px;top:202.89px;font-size:9.85px;line-height:13px;color:#1a1a1a;">Needs Review</span>
<div class="cbx" style="left:1312px;top:219px"></div><span class="t fa " style="left:1325.5px;top:218.89px;font-size:9.85px;line-height:13px;color:#1a1a1a;">Routing Request</span>
<span class="t fa " style="left:1308px;top:230.89px;font-size:9.85px;line-height:13px;color:#1a1a1a;">Canceled</span>
<div class="cbx" style="left:1456px;top:203px"></div><span class="t fa " style="left:1469.5px;top:202.89px;font-size:9.85px;line-height:13px;color:#1a1a1a;">In Planning</span>
<span class="t fa " style="left:1163.8px;top:267.08px;font-size:12.75px;line-height:17px;color:#6d9fd6;font-weight:700;">Date &amp; Address Information</span>
<div class="b " style="left:1164px;top:289px;width:712px;height:2px;border-top:1px solid #9a9a9a;border-bottom:1px solid #eee;"></div>
<span class="t fa " style="left:1164px;top:299.59px;font-size:9.85px;line-height:13px;color:#1a1a1a;">Shipper Trading Partner:</span>
<span class="t fa " style="left:1304px;top:299.59px;font-size:9.85px;line-height:13px;color:#1a1a1a;"><span style="color:#c8511b">*</span> Source Location:</span>
<span class="t fa " style="left:1521.5px;top:299.59px;font-size:9.85px;line-height:13px;color:#1a1a1a;">Receiver Trading Partner:</span>
<span class="t fa " style="left:1661px;top:299.59px;font-size:9.85px;line-height:13px;color:#1a1a1a;"><span style="color:#c8511b">*</span> Destination Location:</span>
<div class="b " style="left:1164px;top:320px;width:103px;height:22px;border:1px solid #c6c6c6;background:#fff;overflow:hidden;border-radius:4px 0 0 4px;"><span class="t fa" style="left:1px;top:3.60px;font-size:9.85px;line-height:13px;color:#666;font-style:italic;">Enter a trading partner</span></div><div class="b " style="left:1266px;top:320px;width:28px;height:22px;border:1px solid #b9b9b9;border-radius:0 4px 4px 0;background:#efefef;"><div class="b" style="left:6.6px;top:4.2px"><svg width="11.6" height="11.6" viewBox="0 0 12 12" style="display:block;"><circle cx="4.9" cy="4.9" r="3.8" fill="none" stroke="#1a1a1a" stroke-width="1.85"/><path d="M7.8 7.8L11 11" stroke="#1a1a1a" stroke-width="2.3" stroke-linecap="round"/></svg></div></div>
<div class="b " style="left:1303px;top:320px;width:103px;height:22px;border:1px solid #c6c6c6;background:#fff;overflow:hidden;border-radius:4px 0 0 4px;"><span class="t fa" style="left:1px;top:3.60px;font-size:9.85px;line-height:13px;color:#777;">Vendor A1 DC1, A1 DC1</span></div><div class="b " style="left:1405px;top:320px;width:28px;height:22px;border:1px solid #b9b9b9;border-radius:0 4px 4px 0;background:#efefef;"><div class="b" style="left:6.6px;top:4.2px"><svg width="11.6" height="11.6" viewBox="0 0 12 12" style="display:block;"><circle cx="4.9" cy="4.9" r="3.8" fill="none" stroke="#1a1a1a" stroke-width="1.85"/><path d="M7.8 7.8L11 11" stroke="#1a1a1a" stroke-width="2.3" stroke-linecap="round"/></svg></div></div>
<div class="b " style="left:1521px;top:320px;width:103px;height:22px;border:1px solid #c6c6c6;background:#fff;overflow:hidden;border-radius:4px 0 0 4px;"><span class="t fa" style="left:1px;top:3.60px;font-size:9.85px;line-height:13px;color:#666;font-style:italic;">Enter a trading partner</span></div><div class="b " style="left:1623px;top:320px;width:28px;height:22px;border:1px solid #b9b9b9;border-radius:0 4px 4px 0;background:#efefef;"><div class="b" style="left:6.6px;top:4.2px"><svg width="11.6" height="11.6" viewBox="0 0 12 12" style="display:block;"><circle cx="4.9" cy="4.9" r="3.8" fill="none" stroke="#1a1a1a" stroke-width="1.85"/><path d="M7.8 7.8L11 11" stroke="#1a1a1a" stroke-width="2.3" stroke-linecap="round"/></svg></div></div>
<div class="b " style="left:1661px;top:320px;width:102px;height:22px;border:1px solid #c6c6c6;background:#fff;overflow:hidden;border-radius:4px 0 0 4px;"><span class="t fa" style="left:1px;top:3.60px;font-size:9.85px;line-height:13px;color:#777;">Dest Loc 1, Dest Loc 1</span></div><div class="b " style="left:1762px;top:320px;width:28px;height:22px;border:1px solid #b9b9b9;border-radius:0 4px 4px 0;background:#efefef;"><div class="b" style="left:6.6px;top:4.2px"><svg width="11.6" height="11.6" viewBox="0 0 12 12" style="display:block;"><circle cx="4.9" cy="4.9" r="3.8" fill="none" stroke="#1a1a1a" stroke-width="1.85"/><path d="M7.8 7.8L11 11" stroke="#1a1a1a" stroke-width="2.3" stroke-linecap="round"/></svg></div></div>
<span class="t fa " style="left:1164px;top:360.89px;font-size:9.85px;line-height:13px;color:#1a1a1a;">Source Contact:</span>
<span class="t fa " style="left:1521.5px;top:360.89px;font-size:9.85px;line-height:13px;color:#1a1a1a;">Destination Contact:</span>
<div class="b " style="left:1164px;top:381px;width:104px;height:22px;border:1px solid #c6c6c6;background:#fff;overflow:hidden;border-radius:4px 0 0 4px;"><span class="t fa" style="left:1px;top:3.60px;font-size:9.85px;line-height:13px;color:#666;font-style:italic;">Enter a contact...</span></div><div class="b " style="left:1267px;top:381px;width:27px;height:22px;border:1px solid #b9b9b9;border-radius:0 4px 4px 0;background:#efefef;"><div class="b" style="left:6.1px;top:4.2px"><svg width="11.6" height="11.6" viewBox="0 0 12 12" style="display:block;"><circle cx="4.9" cy="4.9" r="3.8" fill="none" stroke="#1a1a1a" stroke-width="1.85"/><path d="M7.8 7.8L11 11" stroke="#1a1a1a" stroke-width="2.3" stroke-linecap="round"/></svg></div></div>
<div class="b " style="left:1521px;top:381px;width:105px;height:22px;border:1px solid #c6c6c6;background:#fff;overflow:hidden;border-radius:4px 0 0 4px;"><span class="t fa" style="left:1px;top:3.60px;font-size:9.85px;line-height:13px;color:#666;font-style:italic;">Enter a contact...</span></div><div class="b " style="left:1625px;top:381px;width:26px;height:22px;border:1px solid #b9b9b9;border-radius:0 4px 4px 0;background:#efefef;"><div class="b" style="left:5.6px;top:4.2px"><svg width="11.6" height="11.6" viewBox="0 0 12 12" style="display:block;"><circle cx="4.9" cy="4.9" r="3.8" fill="none" stroke="#1a1a1a" stroke-width="1.85"/><path d="M7.8 7.8L11 11" stroke="#1a1a1a" stroke-width="2.3" stroke-linecap="round"/></svg></div></div>
<span class="t fa " style="left:1304px;top:365.49px;font-size:9.85px;line-height:13px;color:#111;">Vendor A1 DC1</span>
<span class="t fa " style="left:1304px;top:376.49px;font-size:9.85px;line-height:13px;color:#111;">3321 Maple Ave</span>
<span class="t fa " style="left:1304px;top:387.49px;font-size:9.85px;line-height:13px;color:#111;">Raleigh,NC 27614</span>
<span class="t fa " style="left:1304px;top:398.49px;font-size:9.85px;line-height:13px;color:#111;">US</span>
<span class="t fa " style="left:1661px;top:365.49px;font-size:9.85px;line-height:13px;color:#111;">Dest Loc 1</span>
<span class="t fa " style="left:1661px;top:376.49px;font-size:9.85px;line-height:13px;color:#111;">55 Main st.</span>
<span class="t fa " style="left:1661px;top:387.49px;font-size:9.85px;line-height:13px;color:#111;">Wake Forest,NC 27587</span>
<span class="t fa " style="left:1661px;top:398.49px;font-size:9.85px;line-height:13px;color:#111;">US</span>
<span class="t fa " style="left:1164px;top:442.89px;font-size:9.85px;line-height:13px;color:#1a1a1a;">Earliest Ship:</span>
<span class="t fa " style="left:1304px;top:442.89px;font-size:9.85px;line-height:13px;color:#1a1a1a;">Latest Ship:</span>
<span class="t fa " style="left:1521.5px;top:442.89px;font-size:9.85px;line-height:13px;color:#1a1a1a;">Earliest Delivery:</span>
<span class="t fa " style="left:1661px;top:442.89px;font-size:9.85px;line-height:13px;color:#1a1a1a;">Latest Delivery:</span>
<div class="b " style="left:1164px;top:463px;width:68px;height:24px;border:1px solid #dbdbdb;background:#fff;overflow:hidden;border-radius:4px 0 0 4px;"><span class="t fa" style="left:3px;top:7.70px;font-size:9.8px;line-height:13px;color:#aaa;">02/10/2017</span></div><div class="b " style="left:1231px;top:463px;width:18px;height:24px;border:1px solid #dbdbdb;border-radius:0 4px 4px 0;background:#f4f4f4;"><div class="b" style="left:1.2px;top:4.5px"><svg width="12" height="13" viewBox="0 0 12 13" style="display:block;"><rect x="0.5" y="2.5" width="11" height="10" fill="#fff" stroke="#74786f" stroke-width="1"/><rect x="0.5" y="2.5" width="11" height="2.6" fill="#8f938b"/><path d="M0.5 7.4h11M0.5 9.9h11M3.2 5v7.5M6 5v7.5M8.8 5v7.5" stroke="#a6aaa2" stroke-width="0.8"/><rect x="2.2" y="0.3" width="2.2" height="3.4" rx="1" fill="#696d64"/><rect x="7.6" y="0.3" width="2.2" height="3.4" rx="1" fill="#696d64"/></svg></div></div>
<div class="b " style="left:1252px;top:463px;width:47px;height:24px;border:1px solid #dbdbdb;background:#fff;overflow:hidden;border-radius:4px;"><span class="t fa" style="left:3px;top:7.70px;font-size:9.8px;line-height:13px;color:#aaa;">00:00</span></div>
<div class="b " style="left:1303px;top:463px;width:68px;height:24px;border:1px solid #dbdbdb;background:#fff;overflow:hidden;border-radius:4px 0 0 4px;"></div><div class="b " style="left:1370px;top:463px;width:18px;height:24px;border:1px solid #dbdbdb;border-radius:0 4px 4px 0;background:#f4f4f4;"><div class="b" style="left:1.2px;top:4.5px"><svg width="12" height="13" viewBox="0 0 12 13" style="display:block;"><rect x="0.5" y="2.5" width="11" height="10" fill="#fff" stroke="#74786f" stroke-width="1"/><rect x="0.5" y="2.5" width="11" height="2.6" fill="#8f938b"/><path d="M0.5 7.4h11M0.5 9.9h11M3.2 5v7.5M6 5v7.5M8.8 5v7.5" stroke="#a6aaa2" stroke-width="0.8"/><rect x="2.2" y="0.3" width="2.2" height="3.4" rx="1" fill="#696d64"/><rect x="7.6" y="0.3" width="2.2" height="3.4" rx="1" fill="#696d64"/></svg></div></div>
<div class="b " style="left:1391px;top:463px;width:47px;height:24px;border:1px solid #dbdbdb;background:#fff;overflow:hidden;border-radius:4px;"></div>
<div class="b " style="left:1521px;top:463px;width:68px;height:24px;border:1px solid #dbdbdb;background:#fff;overflow:hidden;border-radius:4px 0 0 4px;"></div><div class="b " style="left:1588px;top:463px;width:18px;height:24px;border:1px solid #dbdbdb;border-radius:0 4px 4px 0;background:#f4f4f4;"><div class="b" style="left:1.2px;top:4.5px"><svg width="12" height="13" viewBox="0 0 12 13" style="display:block;"><rect x="0.5" y="2.5" width="11" height="10" fill="#fff" stroke="#74786f" stroke-width="1"/><rect x="0.5" y="2.5" width="11" height="2.6" fill="#8f938b"/><path d="M0.5 7.4h11M0.5 9.9h11M3.2 5v7.5M6 5v7.5M8.8 5v7.5" stroke="#a6aaa2" stroke-width="0.8"/><rect x="2.2" y="0.3" width="2.2" height="3.4" rx="1" fill="#696d64"/><rect x="7.6" y="0.3" width="2.2" height="3.4" rx="1" fill="#696d64"/></svg></div></div>
<div class="b " style="left:1609px;top:463px;width:47px;height:24px;border:1px solid #dbdbdb;background:#fff;overflow:hidden;border-radius:4px;"></div>
<div class="b " style="left:1661px;top:463px;width:68px;height:24px;border:1px solid #dbdbdb;background:#fff;overflow:hidden;border-radius:4px 0 0 4px;"></div><div class="b " style="left:1728px;top:463px;width:18px;height:24px;border:1px solid #dbdbdb;border-radius:0 4px 4px 0;background:#f4f4f4;"><div class="b" style="left:1.2px;top:4.5px"><svg width="12" height="13" viewBox="0 0 12 13" style="display:block;"><rect x="0.5" y="2.5" width="11" height="10" fill="#fff" stroke="#74786f" stroke-width="1"/><rect x="0.5" y="2.5" width="11" height="2.6" fill="#8f938b"/><path d="M0.5 7.4h11M0.5 9.9h11M3.2 5v7.5M6 5v7.5M8.8 5v7.5" stroke="#a6aaa2" stroke-width="0.8"/><rect x="2.2" y="0.3" width="2.2" height="3.4" rx="1" fill="#696d64"/><rect x="7.6" y="0.3" width="2.2" height="3.4" rx="1" fill="#696d64"/></svg></div></div>
<div class="b " style="left:1749px;top:463px;width:47px;height:24px;border:1px solid #dbdbdb;background:#fff;overflow:hidden;border-radius:4px;"></div>
<div class="b " style="left:1443px;top:463px;width:58px;height:22px;border:1px solid #dcdcdc;border-radius:3px;background:#f5f5f5;"><span class="t fa" style="left:0;right:0;text-align:center;top:3.5px;font-size:10px;line-height:13px;color:#8a8a8a">Get Hours</span></div>
<div class="b " style="left:1800px;top:463px;width:58px;height:22px;border:1px solid #dcdcdc;border-radius:3px;background:#f5f5f5;"><span class="t fa" style="left:0;right:0;text-align:center;top:3.5px;font-size:10px;line-height:13px;color:#8a8a8a">Get Hours</span></div>
<span class="t fa " style="left:1164px;top:497.09px;font-size:9.85px;line-height:13px;color:#1a1a1a;">Earliest Pickup Appt:</span>
<span class="t fa " style="left:1304px;top:497.09px;font-size:9.85px;line-height:13px;color:#1a1a1a;">Latest Pickup Appt:</span>
<span class="t fa " style="left:1521.5px;top:497.09px;font-size:9.85px;line-height:13px;color:#1a1a1a;">Earliest Del Appt:</span>
<span class="t fa " style="left:1661px;top:497.09px;font-size:9.85px;line-height:13px;color:#1a1a1a;">Latest Del Appt:</span>
<div class="b " style="left:1164px;top:517px;width:68px;height:24px;border:1px solid #dbdbdb;background:#fff;overflow:hidden;border-radius:4px 0 0 4px;"></div><div class="b " style="left:1231px;top:517px;width:18px;height:24px;border:1px solid #dbdbdb;border-radius:0 4px 4px 0;background:#f4f4f4;"><div class="b" style="left:1.2px;top:4.5px"><svg width="12" height="13" viewBox="0 0 12 13" style="display:block;"><rect x="0.5" y="2.5" width="11" height="10" fill="#fff" stroke="#74786f" stroke-width="1"/><rect x="0.5" y="2.5" width="11" height="2.6" fill="#8f938b"/><path d="M0.5 7.4h11M0.5 9.9h11M3.2 5v7.5M6 5v7.5M8.8 5v7.5" stroke="#a6aaa2" stroke-width="0.8"/><rect x="2.2" y="0.3" width="2.2" height="3.4" rx="1" fill="#696d64"/><rect x="7.6" y="0.3" width="2.2" height="3.4" rx="1" fill="#696d64"/></svg></div></div>
<div class="b " style="left:1252px;top:517px;width:47px;height:24px;border:1px solid #dbdbdb;background:#fff;overflow:hidden;border-radius:4px;"></div>
<div class="b " style="left:1303px;top:517px;width:68px;height:24px;border:1px solid #dbdbdb;background:#fff;overflow:hidden;border-radius:4px 0 0 4px;"></div><div class="b " style="left:1370px;top:517px;width:18px;height:24px;border:1px solid #dbdbdb;border-radius:0 4px 4px 0;background:#f4f4f4;"><div class="b" style="left:1.2px;top:4.5px"><svg width="12" height="13" viewBox="0 0 12 13" style="display:block;"><rect x="0.5" y="2.5" width="11" height="10" fill="#fff" stroke="#74786f" stroke-width="1"/><rect x="0.5" y="2.5" width="11" height="2.6" fill="#8f938b"/><path d="M0.5 7.4h11M0.5 9.9h11M3.2 5v7.5M6 5v7.5M8.8 5v7.5" stroke="#a6aaa2" stroke-width="0.8"/><rect x="2.2" y="0.3" width="2.2" height="3.4" rx="1" fill="#696d64"/><rect x="7.6" y="0.3" width="2.2" height="3.4" rx="1" fill="#696d64"/></svg></div></div>
<div class="b " style="left:1391px;top:517px;width:47px;height:24px;border:1px solid #dbdbdb;background:#fff;overflow:hidden;border-radius:4px;"></div>
<div class="b " style="left:1521px;top:517px;width:68px;height:24px;border:1px solid #dbdbdb;background:#fff;overflow:hidden;border-radius:4px 0 0 4px;"></div><div class="b " style="left:1588px;top:517px;width:18px;height:24px;border:1px solid #dbdbdb;border-radius:0 4px 4px 0;background:#f4f4f4;"><div class="b" style="left:1.2px;top:4.5px"><svg width="12" height="13" viewBox="0 0 12 13" style="display:block;"><rect x="0.5" y="2.5" width="11" height="10" fill="#fff" stroke="#74786f" stroke-width="1"/><rect x="0.5" y="2.5" width="11" height="2.6" fill="#8f938b"/><path d="M0.5 7.4h11M0.5 9.9h11M3.2 5v7.5M6 5v7.5M8.8 5v7.5" stroke="#a6aaa2" stroke-width="0.8"/><rect x="2.2" y="0.3" width="2.2" height="3.4" rx="1" fill="#696d64"/><rect x="7.6" y="0.3" width="2.2" height="3.4" rx="1" fill="#696d64"/></svg></div></div>
<div class="b " style="left:1609px;top:517px;width:47px;height:24px;border:1px solid #dbdbdb;background:#fff;overflow:hidden;border-radius:4px;"></div>
<div class="b " style="left:1661px;top:517px;width:68px;height:24px;border:1px solid #dbdbdb;background:#fff;overflow:hidden;border-radius:4px 0 0 4px;"></div><div class="b " style="left:1728px;top:517px;width:18px;height:24px;border:1px solid #dbdbdb;border-radius:0 4px 4px 0;background:#f4f4f4;"><div class="b" style="left:1.2px;top:4.5px"><svg width="12" height="13" viewBox="0 0 12 13" style="display:block;"><rect x="0.5" y="2.5" width="11" height="10" fill="#fff" stroke="#74786f" stroke-width="1"/><rect x="0.5" y="2.5" width="11" height="2.6" fill="#8f938b"/><path d="M0.5 7.4h11M0.5 9.9h11M3.2 5v7.5M6 5v7.5M8.8 5v7.5" stroke="#a6aaa2" stroke-width="0.8"/><rect x="2.2" y="0.3" width="2.2" height="3.4" rx="1" fill="#696d64"/><rect x="7.6" y="0.3" width="2.2" height="3.4" rx="1" fill="#696d64"/></svg></div></div>
<div class="b " style="left:1749px;top:517px;width:47px;height:24px;border:1px solid #dbdbdb;background:#fff;overflow:hidden;border-radius:4px;"></div>
<span class="t fa " style="left:1164px;top:550.89px;font-size:9.85px;line-height:13px;color:#1a1a1a;">Pickup Appt:</span>
<span class="t fa " style="left:1304px;top:550.89px;font-size:9.85px;line-height:13px;color:#1a1a1a;">Pickup Appt Num:</span>
<span class="t fa " style="left:1521.5px;top:550.89px;font-size:9.85px;line-height:13px;color:#1a1a1a;">Del Appt:</span>
<span class="t fa " style="left:1661px;top:550.89px;font-size:9.85px;line-height:13px;color:#1a1a1a;">Del Appt Num:</span>
<div class="b " style="left:1164px;top:571px;width:68px;height:24px;border:1px solid #dbdbdb;background:#fff;overflow:hidden;border-radius:4px 0 0 4px;"></div><div class="b " style="left:1231px;top:571px;width:18px;height:24px;border:1px solid #dbdbdb;border-radius:0 4px 4px 0;background:#f4f4f4;"><div class="b" style="left:1.2px;top:4.5px"><svg width="12" height="13" viewBox="0 0 12 13" style="display:block;"><rect x="0.5" y="2.5" width="11" height="10" fill="#fff" stroke="#74786f" stroke-width="1"/><rect x="0.5" y="2.5" width="11" height="2.6" fill="#8f938b"/><path d="M0.5 7.4h11M0.5 9.9h11M3.2 5v7.5M6 5v7.5M8.8 5v7.5" stroke="#a6aaa2" stroke-width="0.8"/><rect x="2.2" y="0.3" width="2.2" height="3.4" rx="1" fill="#696d64"/><rect x="7.6" y="0.3" width="2.2" height="3.4" rx="1" fill="#696d64"/></svg></div></div>
<div class="b " style="left:1252px;top:571px;width:47px;height:24px;border:1px solid #dbdbdb;background:#fff;overflow:hidden;border-radius:4px;"></div>
<div class="b " style="left:1303px;top:571px;width:123px;height:21px;border:1px solid #a5a5a5;background:#fff;overflow:hidden;"></div>
<div class="b " style="left:1521px;top:571px;width:68px;height:24px;border:1px solid #dbdbdb;background:#fff;overflow:hidden;border-radius:4px 0 0 4px;"></div><div class="b " style="left:1588px;top:571px;width:18px;height:24px;border:1px solid #dbdbdb;border-radius:0 4px 4px 0;background:#f4f4f4;"><div class="b" style="left:1.2px;top:4.5px"><svg width="12" height="13" viewBox="0 0 12 13" style="display:block;"><rect x="0.5" y="2.5" width="11" height="10" fill="#fff" stroke="#74786f" stroke-width="1"/><rect x="0.5" y="2.5" width="11" height="2.6" fill="#8f938b"/><path d="M0.5 7.4h11M0.5 9.9h11M3.2 5v7.5M6 5v7.5M8.8 5v7.5" stroke="#a6aaa2" stroke-width="0.8"/><rect x="2.2" y="0.3" width="2.2" height="3.4" rx="1" fill="#696d64"/><rect x="7.6" y="0.3" width="2.2" height="3.4" rx="1" fill="#696d64"/></svg></div></div>
<div class="b " style="left:1609px;top:571px;width:47px;height:24px;border:1px solid #dbdbdb;background:#fff;overflow:hidden;border-radius:4px;"></div>
<div class="b " style="left:1661px;top:571px;width:133px;height:21px;border:1px solid #a5a5a5;background:#fff;overflow:hidden;"></div>
<span class="t fa " style="left:1164px;top:604.69px;font-size:9.85px;line-height:13px;color:#1a1a1a;">Hours of Operations:</span>
<span class="t fa " style="left:1304px;top:604.69px;font-size:9.85px;line-height:13px;color:#1a1a1a;">Appointment Calendar:</span>
<span class="t fa " style="left:1521.5px;top:604.69px;font-size:9.85px;line-height:13px;color:#1a1a1a;">Hours of Operations:</span>
<span class="t fa " style="left:1661px;top:604.69px;font-size:9.85px;line-height:13px;color:#1a1a1a;">Appointment Calendar:</span>
<div class="b " style="left:1164px;top:625px;width:60px;height:21px;border:1px solid #c4c4c4;background:#fff;overflow:hidden;"></div>
<div class="b " style="left:1223px;top:625px;width:21px;height:22px;border:1px solid #c4c4c4;background:#fff;"><div class="b" style="left:3px;top:2px"><svg width="13" height="14" viewBox="0 0 13 14" style="display:block;"><rect x="0.6" y="3" width="11.8" height="10.4" fill="#fff" stroke="#3c3c3c" stroke-width="1.1"/><rect x="0.1" y="2.4" width="12.8" height="2.3" fill="#4a4a4a"/><path d="M2.2 3V1.9c0-.9.5-1.4 1.3-1.4s1.3.5 1.3 1.4V3M8.2 3V1.9c0-.9.5-1.4 1.3-1.4s1.3.5 1.3 1.4V3" fill="none" stroke="#4a4a4a" stroke-width="0.9"/></svg></div></div>
<div class="b " style="left:1303px;top:625px;width:60px;height:21px;border:1px solid #c4c4c4;background:#fff;overflow:hidden;"></div>
<div class="b " style="left:1362px;top:625px;width:21px;height:22px;border:1px solid #c4c4c4;background:#fff;"><div class="b" style="left:3px;top:2px"><svg width="13" height="14" viewBox="0 0 13 14" style="display:block;"><rect x="0.6" y="3" width="11.8" height="10.4" fill="#fff" stroke="#3c3c3c" stroke-width="1.1"/><rect x="0.1" y="2.4" width="12.8" height="2.3" fill="#4a4a4a"/><path d="M2.2 3V1.9c0-.9.5-1.4 1.3-1.4s1.3.5 1.3 1.4V3M8.2 3V1.9c0-.9.5-1.4 1.3-1.4s1.3.5 1.3 1.4V3" fill="none" stroke="#4a4a4a" stroke-width="0.9"/></svg></div></div>
<div class="b " style="left:1521px;top:625px;width:60px;height:21px;border:1px solid #c4c4c4;background:#fff;overflow:hidden;"></div>
<div class="b " style="left:1580px;top:625px;width:21px;height:22px;border:1px solid #c4c4c4;background:#fff;"><div class="b" style="left:3px;top:2px"><svg width="13" height="14" viewBox="0 0 13 14" style="display:block;"><rect x="0.6" y="3" width="11.8" height="10.4" fill="#fff" stroke="#3c3c3c" stroke-width="1.1"/><rect x="0.1" y="2.4" width="12.8" height="2.3" fill="#4a4a4a"/><path d="M2.2 3V1.9c0-.9.5-1.4 1.3-1.4s1.3.5 1.3 1.4V3M8.2 3V1.9c0-.9.5-1.4 1.3-1.4s1.3.5 1.3 1.4V3" fill="none" stroke="#4a4a4a" stroke-width="0.9"/></svg></div></div>
<div class="b " style="left:1661px;top:625px;width:60px;height:21px;border:1px solid #c4c4c4;background:#fff;overflow:hidden;"></div>
<div class="b " style="left:1720px;top:625px;width:21px;height:22px;border:1px solid #c4c4c4;background:#fff;"><div class="b" style="left:3px;top:2px"><svg width="13" height="14" viewBox="0 0 13 14" style="display:block;"><rect x="0.6" y="3" width="11.8" height="10.4" fill="#fff" stroke="#3c3c3c" stroke-width="1.1"/><rect x="0.1" y="2.4" width="12.8" height="2.3" fill="#4a4a4a"/><path d="M2.2 3V1.9c0-.9.5-1.4 1.3-1.4s1.3.5 1.3 1.4V3M8.2 3V1.9c0-.9.5-1.4 1.3-1.4s1.3.5 1.3 1.4V3" fill="none" stroke="#4a4a4a" stroke-width="0.9"/></svg></div></div>
<div class="cbx" style="left:1168px;top:661px"></div><span class="t fa " style="left:1181.5px;top:660.69px;font-size:9.85px;line-height:13px;color:#1a1a1a;">Pickup Appt Requested</span>
<div class="cbx" style="left:1306px;top:661px"></div><span class="t fa " style="left:1320px;top:660.69px;font-size:9.85px;line-height:13px;color:#1a1a1a;">Pickup Appt Required</span>
<div class="cbx" style="left:1525px;top:661px"></div><span class="t fa " style="left:1538.8px;top:660.69px;font-size:9.85px;line-height:13px;color:#1a1a1a;">Del Appt Requested</span>
<div class="cbx" style="left:1649px;top:661px"></div><span class="t fa " style="left:1662.8px;top:660.69px;font-size:9.85px;line-height:13px;color:#1a1a1a;">Del Appt Required</span>
<span class="t fa " style="left:1163.4px;top:696.58px;font-size:12.75px;line-height:17px;color:#6d9fd6;font-weight:700;">Order Line Items</span>
<div class="b " style="left:1164px;top:720px;width:712px;height:2px;border-top:1px solid #9a9a9a;border-bottom:1px solid #eee;"></div>
<div class="b " style="left:1163px;top:728px;width:713px;height:69px;border:1px solid #aaa;border-radius:4px;overflow:hidden;background:#fff;"><div class="b grad" style="left:0px;top:0px;width:711px;height:28px;border-bottom:1px solid #aaa;"></div><div class="b" style="left:0;top:0"><table class="g li" style="width:725px"><colgroup><col style="width:28px"><col style="width:27px"><col style="width:90px"><col style="width:90px"><col style="width:68px"><col style="width:67px"><col style="width:45px"><col style="width:68px"><col style="width:67px"><col style="width:68px"><col style="width:67px"><col style="width:40px"></colgroup><tr><th style="padding:0;position:relative"><span class="cb2 ic" style="left:7px;top:7px"></span></th><th>Li...</th><th>Commodity</th><th>Description</th><th>NMFC</th><th>Freight Cla...</th><th>Locked</th><th>Density</th><th>Gross Wt</th><th>Net Wt</th><th>Gross Vol</th><th>Net Vol</th></tr><tr><td class="c f"><span class="cb2 ic" style="left:7px;top:6px"></span></td><td class="f a">1</td><td></td><td class="a">Widgets</td><td></td><td class="a">70</td><td class="c"><span class="cb2 ic" style="left:15px;top:6px"></span></td><td></td><td class="a r">500.00</td><td class="a r">500.00</td><td class="a r">0.00</td><td></td></tr></table></div><div class="b " style="left:0px;top:50px;width:711px;height:17px;background:#f0f0f0;"></div><div class="b " style="left:16px;top:51px;width:237px;height:15px;border:1px solid #a6a6a6;border-radius:3px;background:#f0f0f0;"></div><div class="b" style="left:5px;top:54px"><svg width="5" height="9" viewBox="0 0 5 9" style="display:block;"><path d="M5 0L0 4.5L5 9z" fill="#7b7f7b"/></svg></div><div class="b" style="left:701px;top:54px"><svg width="5" height="9" viewBox="0 0 5 9" style="display:block;"><path d="M0 0L5 4.5L0 9z" fill="#7b7f7b"/></svg></div></div>
<div class="b " style="left:1890px;top:6px;width:10px;height:800px;background:#f1f1f1;"></div>
<div class="b " style="left:1892px;top:23px;width:8px;height:322px;background:#c1c1c1;"></div>
<div class="b" style="left:1895px;top:13px"><svg width="7" height="4" viewBox="0 0 7 4" style="display:block;"><path d="M0 4L3.5 0L7 4z" fill="#a3a3a3"/></svg></div>
<div class="b" style="left:1895px;top:801px"><svg width="7" height="4" viewBox="0 0 7 4" style="display:block;"><path d="M0 0L3.5 4L7 0z" fill="#505050"/></svg></div>
</body></html>
